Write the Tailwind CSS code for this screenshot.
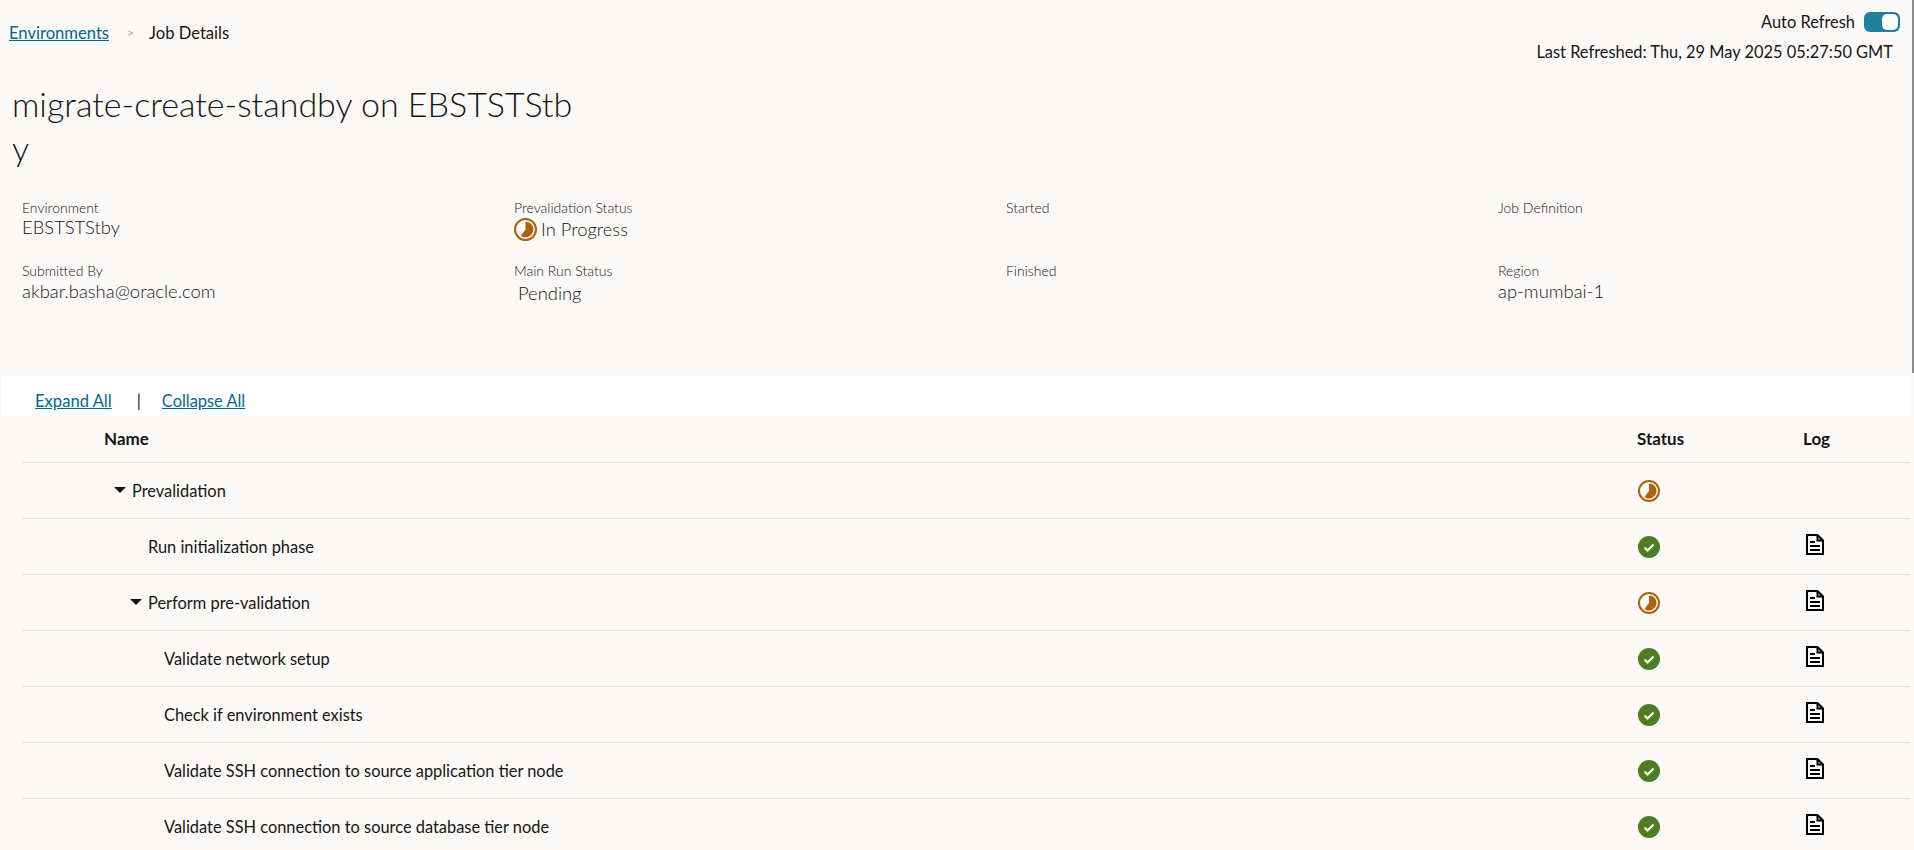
<!DOCTYPE html>
<html>
<head>
<meta charset="utf-8">
<title>Job Details</title>
<script src="https://cdn.jsdelivr.net/npm/@tailwindcss/browser@4"></script>
</head>
<body class="h-[850px] overflow-hidden bg-[#fbf9f8] font-['Lato',sans-serif] text-[#161513]">

<div class="relative h-[376px] pr-[2px]">
    <div class="absolute right-0 top-0 h-[373px] w-[2px] bg-[#8a8a8a]"></div>

    <div class="flex items-start justify-between">
        <nav class="flex items-center pl-[9px] pt-[23px] text-[16.6px] leading-[20px]">
            <a href="#" class="text-[#00688c] underline">Environments</a>
            <span class="ml-[18px] mr-[15px] text-[12px] text-[#a9a5a0]">&gt;</span>
            <span>Job Details</span>
        </nav>
        <div class="flex flex-col items-end pr-[19px] pt-[12px] text-[16.4px] leading-[20px]">
            <div class="flex items-center gap-[9px]">
                <span>Auto Refresh</span>
                <span class="relative -mr-[7px] block h-[20px] w-[36px] rounded-[6px] bg-[#227e9e]">
                    <span class="absolute right-[2px] top-[2px] h-[16px] w-[16px] rounded-[5px] bg-white"></span>
                </span>
            </div>
            <div class="mt-[10px]">Last Refreshed: Thu, 29 May 2025 05:27:50 GMT</div>
        </div>
    </div>

    <h1 class="ml-[12px] mt-[20px] w-[574px] break-all text-[34px] font-light leading-[44px]">migrate-create-standby on EBSTSTStby</h1>

    <div class="ml-[22px] mt-[29px] grid grid-cols-[492px_492px_492px_1fr] grid-rows-[63px_64px] font-light">
        <div>
            <div class="text-[14px] leading-[18px]">Environment</div>
            <div class="-mt-[1px] text-[18.4px] leading-[22px]">EBSTSTStby</div>
        </div>
        <div>
            <div class="text-[14px] leading-[18px]">Prevalidation Status</div>
            <div class="flex items-center gap-[4px] text-[18.4px] leading-[24px]">
                <svg class="h-[23px] w-[23px]" viewBox="0 0 22 22"><circle cx="11" cy="11" r="10" fill="none" stroke="#ac630c" stroke-width="2"/><path d="M11 3.5A7.5 7.5 0 1 1 6.5 17L11 11Z" fill="#ac630c"/></svg>
                <span>In Progress</span>
            </div>
        </div>
        <div class="text-[14px] leading-[18px]">Started</div>
        <div class="text-[14px] leading-[18px]">Job Definition</div>
        <div>
            <div class="text-[14px] leading-[18px]">Submitted By</div>
            <div class="-mt-[1px] text-[18.4px] leading-[24px]">akbar.basha@oracle.com</div>
        </div>
        <div>
            <div class="text-[14px] leading-[18px]">Main Run Status</div>
            <div class="pl-[4px] pt-[1px] text-[18.4px] leading-[24px]">Pending</div>
        </div>
        <div class="text-[14px] leading-[18px]">Finished</div>
        <div>
            <div class="text-[14px] leading-[18px]">Region</div>
            <div class="-mt-[1px] text-[18.4px] leading-[24px]">ap-mumbai-1</div>
        </div>
    </div>
</div>

<div class="ml-[1px] mr-[4px] flex h-[40px] items-center bg-white pl-[34px] pt-[11px] text-[16.6px]">
    <a href="#" class="text-[#00688c] underline">Expand All</a>
    <span class="ml-[25px] mr-[21px] text-[#161513]">|</span>
    <a href="#" class="text-[16.4px] text-[#00688c] underline">Collapse All</a>
</div>

<table class="ml-[22px] w-[1888px] table-fixed border-collapse text-[16.4px]">
    <thead>
        <tr class="h-[46px] border-b border-[#e4e1dd] text-left text-[17px] font-bold">
            <th class="w-[82px]"></th>
            <th class="font-bold">Name</th>
            <th class="w-[166px] font-bold">Status</th>
            <th class="w-[107px] font-bold">Log</th>
        </tr>
    </thead>
    <tbody id="job-steps-body"></tbody>
</table>

<script>
    var progressIcon = '<svg class="ml-[1px] h-[22px] w-[22px]" viewBox="0 0 22 22"><circle cx="11" cy="11" r="10" fill="none" stroke="#ac630c" stroke-width="2"/><path d="M11 3.5A7.5 7.5 0 1 1 6.5 17L11 11Z" fill="#ac630c"/></svg>';
    var doneIcon = '<svg class="ml-[1px] h-[22px] w-[22px]" viewBox="0 0 22 22"><circle cx="11" cy="11" r="11" fill="#4f7d21"/><path d="M6.5 11.5L9.6 14.5L15.5 8.5" fill="none" stroke="#fff" stroke-width="2"/></svg>';
    var logIcon = '<svg class="-mt-[5px] ml-[3px] h-[21px] w-[18px]" viewBox="0 0 18 21"><path d="M1 1H11.5L17 6.5V20H1Z M11.5 1V6.5H17" fill="none" stroke="#000" stroke-width="2"/><path d="M4 8H9M4 12H14M4 16H14" stroke="#000" stroke-width="2"/></svg>';
    var caret = '<span class="absolute -ml-[18px] mt-[8px] h-0 w-0 border-x-[6px] border-t-[6px] border-x-transparent border-t-[#161513]"></span>';

    // name, indent level, has caret, status icon, has log
    var steps = [
        ["Prevalidation", 0, true, progressIcon, false],
        ["Run initialization phase", 1, false, doneIcon, true],
        ["Perform pre-validation", 1, true, progressIcon, true],
        ["Validate network setup", 2, false, doneIcon, true],
        ["Check if environment exists", 2, false, doneIcon, true],
        ["Validate SSH connection to source application tier node", 2, false, doneIcon, true],
        ["Validate SSH connection to source database tier node", 2, false, doneIcon, true]
    ];

    var indents = ["pl-[110px]", "pl-[126px]", "pl-[142px]"];
    var rows = "";
    steps.forEach(function (step) {
        rows += '<tr class="h-[56px] border-b border-[#e4e1dd]">'
            + '<td colspan="2" class="pt-[2px] ' + indents[step[1]] + '">' + (step[2] ? caret : "") + step[0] + '</td>'
            + '<td class="pt-[2px]">' + step[3] + '</td>'
            + '<td class="pt-[2px]">' + (step[4] ? logIcon : "") + '</td>'
            + '</tr>';
    });
    document.getElementById("job-steps-body").innerHTML = rows;
</script>
</body>
</html>
